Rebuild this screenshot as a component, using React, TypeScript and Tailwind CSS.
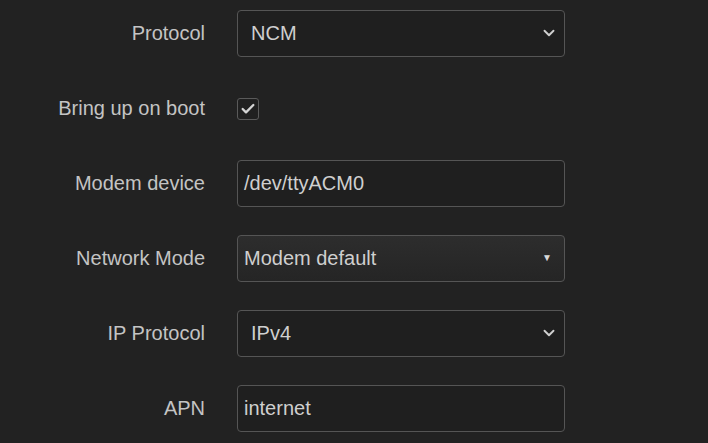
import { Check, ChevronDown } from "lucide-react";

type Row = {
  label: string;
  kind: "select" | "input" | "check" | "legacy";
  value?: string;
};

const rows: Row[] = [
  { label: "Protocol", kind: "select", value: "NCM" },
  { label: "Bring up on boot", kind: "check" },
  { label: "Modem device", kind: "input", value: "/dev/ttyACM0" },
  { label: "Network Mode", kind: "legacy", value: "Modem default" },
  { label: "IP Protocol", kind: "select", value: "IPv4" },
  { label: "APN", kind: "input", value: "internet" },
];

function Field({ row }: { row: Row }) {
  if (row.kind === "check") {
    return (
      <div className="flex h-[47px] items-center">
        <span className="grid h-[22px] w-[22px] place-items-center rounded-[3px] border border-[#5a5a5a] bg-[#202020] text-[#d4d4d4]">
          <Check size={16} strokeWidth={3.5} />
        </span>
      </div>
    );
  }
  if (row.kind === "input") {
    return (
      <div className="flex h-[47px] w-[328px] items-center rounded-[4px] border border-[#555] bg-[#1f1f1f] px-[6px] pb-[2px] text-[#cfcfcf]">
        {row.value}
      </div>
    );
  }
  if (row.kind === "legacy") {
    return (
      <div className="flex h-[47px] w-[328px] items-center justify-between rounded-[4px] border border-[#555] bg-gradient-to-b from-[#2d2d2d] to-[#252525] pb-[2px] pl-[6px] pr-[12px] text-[#cfcfcf]">
        <span>{row.value}</span>
        <span className="text-[10px] text-[#d8d8d8]">▼</span>
      </div>
    );
  }
  return (
    <div className="flex h-[47px] w-[328px] items-center justify-between rounded-[4px] border border-[#555] bg-[#1f1f1f] pb-[2px] pl-[13px] pr-[6px] text-[#cfcfcf]">
      <span>{row.value}</span>
      <ChevronDown size={18} strokeWidth={2.5} className="text-[#d0d0d0]" />
    </div>
  );
}

export default function App() {
  return (
    <div className="h-[443px] w-[708px] overflow-hidden bg-[#222222] pt-[10px] font-['Liberation_Sans',Arial,sans-serif] text-[20px]">
      <div className="flex flex-col gap-[28px]">
        {rows.map((r) => (
          <div key={r.label} className="flex items-center gap-[32px]">
            <span className="w-[205px] pb-[2px] text-right text-[#c4c4c4]">{r.label}</span>
            <Field row={r} />
          </div>
        ))}
      </div>
    </div>
  );
}
